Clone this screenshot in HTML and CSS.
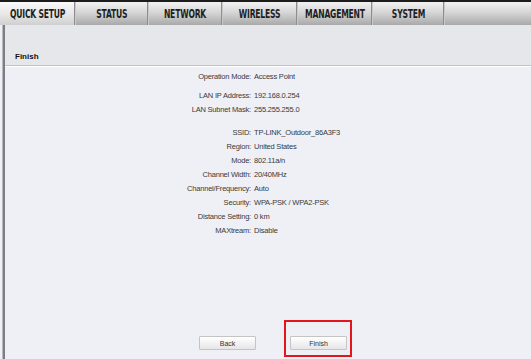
FILE: index.html
```html
<!DOCTYPE html>
<html lang="en">
<head>
    <meta charset="UTF-8">
    <title>Quick Setup - Finish</title>
    <link rel="stylesheet" href="styles.css">
</head>
<body>
    <nav class="tabs">
        <div class="tab active w76"><span>QUICK SETUP</span></div>
        <div class="tab w73"><span>STATUS</span></div>
        <div class="tab w74"><span>NETWORK</span></div>
        <div class="tab w75"><span>WIRELESS</span></div>
        <div class="tab w75"><span>MANAGEMENT</span></div>
        <div class="tab w72"><span>SYSTEM</span></div>
        <div class="tab filler"></div>
    </nav>

    <main class="main">
        <h2 class="title">Finish</h2>

        <section class="summary">
            <div class="group">
                <div class="row"><span class="label">Operation Mode:</span><span class="value">Access Point</span></div>
            </div>
            <div class="group">
                <div class="row"><span class="label">LAN IP Address:</span><span class="value">192.168.0.254</span></div>
                <div class="row"><span class="label">LAN Subnet Mask:</span><span class="value">255.255.255.0</span></div>
            </div>
            <div class="group">
                <div class="row"><span class="label">SSID:</span><span class="value">TP-LINK_Outdoor_86A3F3</span></div>
                <div class="row"><span class="label">Region:</span><span class="value">United States</span></div>
                <div class="row"><span class="label">Mode:</span><span class="value">802.11a/n</span></div>
                <div class="row"><span class="label">Channel Width:</span><span class="value">20/40MHz</span></div>
                <div class="row"><span class="label">Channel/Frequency:</span><span class="value">Auto</span></div>
                <div class="row"><span class="label">Security:</span><span class="value">WPA-PSK / WPA2-PSK</span></div>
                <div class="row"><span class="label">Distance Setting:</span><span class="value">0 km</span></div>
                <div class="row"><span class="label">MAXtream:</span><span class="value">Disable</span></div>
            </div>
        </section>

        <footer class="actions">
            <button class="btn">Back</button>
            <div class="highlight">
                <button class="btn">Finish</button>
            </div>
        </footer>
    </main>
</body>
</html>
```

FILE: styles.css
```css
* {
    margin: 0;
    padding: 0;
    box-sizing: border-box;
}

html, body {
    height: 100%;
}

body {
    background-color: #eef0f5;
    font-family: "Liberation Sans", Arial, sans-serif;
    color: #3a3a3a;
    display: flex;
    flex-direction: column;
    overflow: hidden;
}

.tabs {
    display: flex;
    height: 25px;
    border-top: 2px solid #1c1c1c;
    flex: none;
}

.tab {
    flex: none;
    display: flex;
    align-items: center;
    justify-content: center;
    background: linear-gradient(#f2f2f2, #d6d6d6 45%, #a9a9a9);
    border-right: 1px solid #c9c9c9;
    box-shadow: inset -1px 0 0 #8e8e8e;
    white-space: nowrap;
    overflow: hidden;
}

.tab span {
    display: inline-block;
    font-family: "DejaVu Sans", sans-serif;
    font-stretch: condensed;
    font-weight: bold;
    font-size: 12.5px;
    color: #1e1e1e;
    transform: scaleX(0.68);
    letter-spacing: -0.3px;
}

.tab.active {
    background: linear-gradient(#fafafa, #e4e4e4 60%, #cfcfcf);
}

.tab.filler {
    flex: 1;
    border-right: none;
    box-shadow: none;
}

.w76 { width: 76px; }
.w73 { width: 73px; }
.w74 { width: 74px; }
.w75 { width: 75px; }
.w72 { width: 72px; }

.main {
    flex: 1;
    display: flex;
    flex-direction: column;
    margin-left: 3px;
    border-left: 2px solid #7d7d85;
    box-shadow: -1px 0 0 #b8b8be;
}

.title {
    background-color: #e6e7eb;
    font-size: 8px;
    font-weight: bold;
    color: #111;
    padding: 27px 0 4px 10px;
    border-bottom: 1px solid #c2c3c8;
    box-shadow: 0 1px 0 #ffffff;
}

.summary {
    padding-top: 3px;
}

.group {
    margin-bottom: 5px;
}

.group + .group + .group {
    margin-top: 9px;
}

.row {
    display: flex;
    height: 14px;
    align-items: center;
    font-size: 7.5px;
    letter-spacing: -0.2px;
}

.label {
    width: 249px;
    text-align: right;
    padding-right: 3px;
}

.actions {
    margin-top: auto;
    display: flex;
    align-items: flex-end;
    gap: 28px;
    padding: 0 0 2px 194px;
}

.btn {
    width: 57px;
    height: 14px;
    font-family: "Liberation Sans", Arial, sans-serif;
    font-size: 7px;
    color: #333;
    background: linear-gradient(#ffffff, #e6e6e6);
    border: 1px solid #c4c4c4;
    border-radius: 1px;
    margin-bottom: 7px;
}

.highlight {
    border: 2px solid #e3161b;
    padding: 10px 3px 0 4px;
}

.highlight .btn {
    margin-bottom: 5px;
}
```
